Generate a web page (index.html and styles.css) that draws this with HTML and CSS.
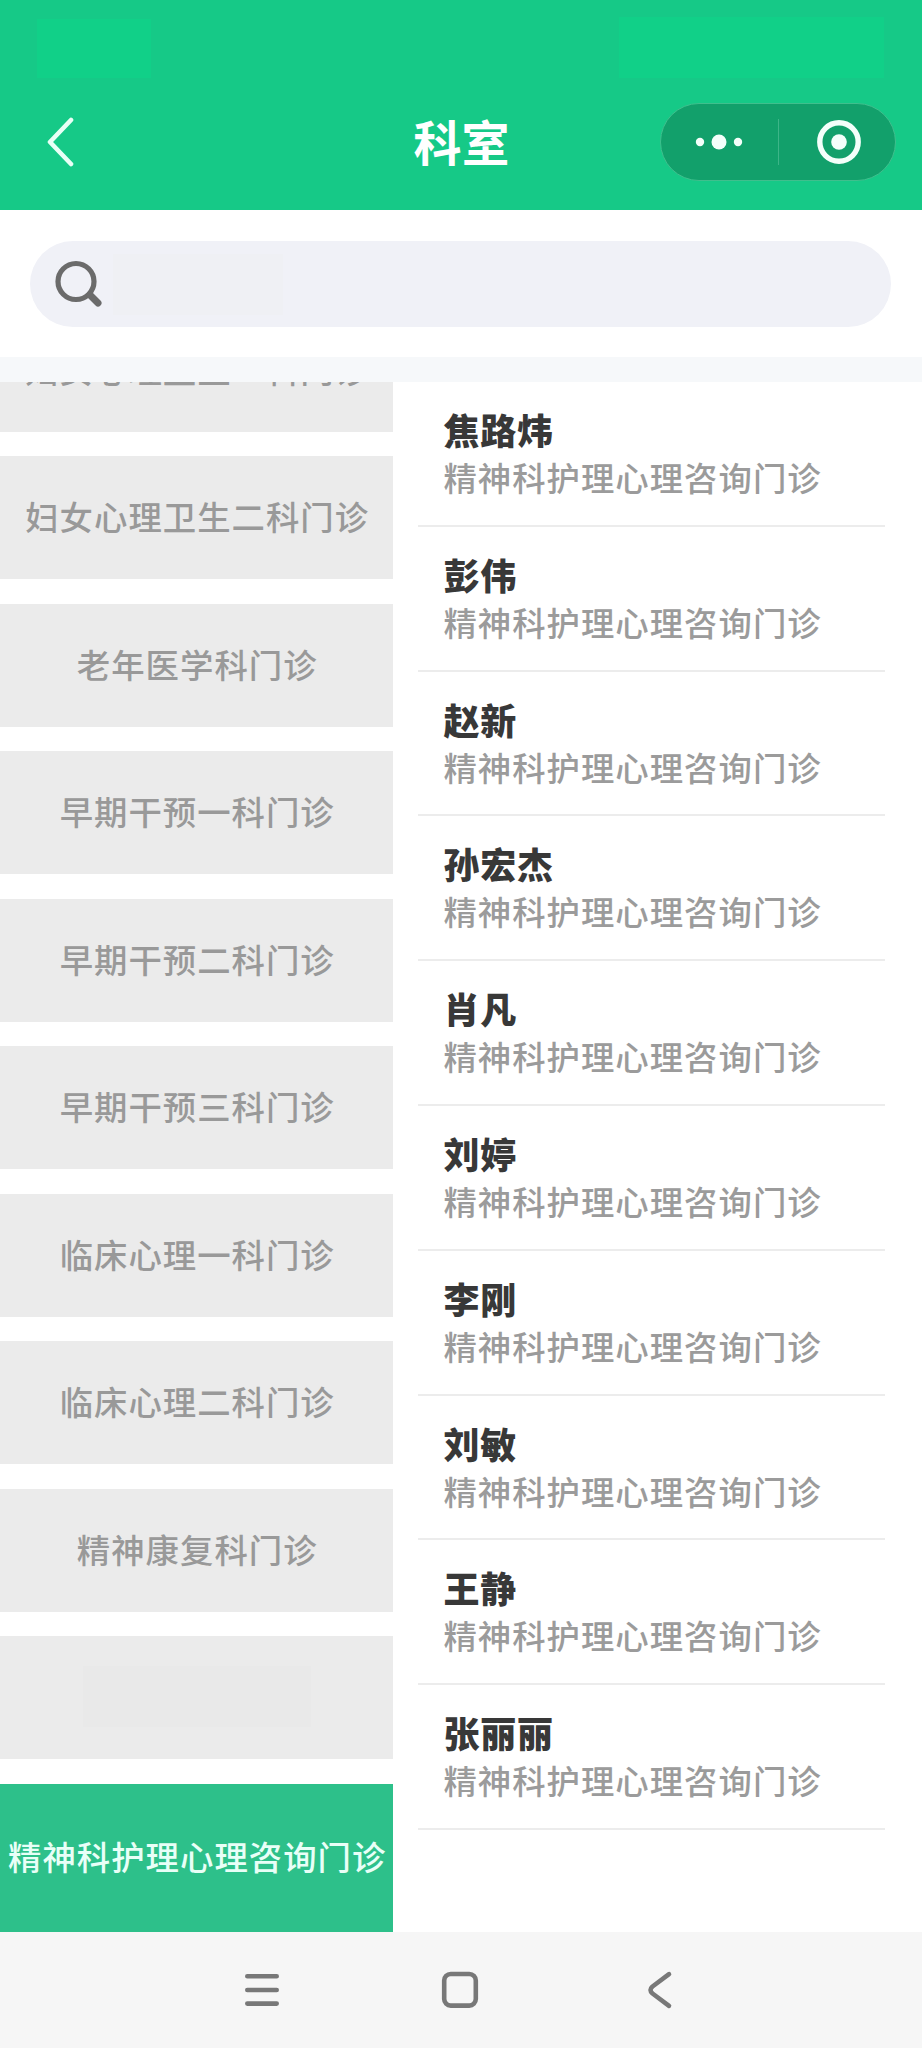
FILE: index.html
```html
<!DOCTYPE html>
<html lang="zh-CN">
<head>
<meta charset="utf-8" />
<meta name="viewport" content="width=device-width,initial-scale=1" />
<title>科室</title>
<link rel="stylesheet" href="styles.css">
</head>
<body>
<header class="header">
  <div class="status">
    <span class="status-time"></span>
    <span class="status-icons"></span>
  </div>
  <div class="titlebar">
    <svg class="back" viewBox="0 0 30 50"><path d="M24 3 3 25l21 22"/></svg>
    <h1>科室</h1>
    <div class="capsule">
      <svg class="dots" viewBox="0 0 48 16"><circle cx="5" cy="8" r="4.2"/><circle cx="24" cy="8" r="7.5"/><circle cx="43" cy="8" r="4.2"/></svg>
      <span class="capsule-line"></span>
      <svg class="target" viewBox="0 0 44 44"><circle class="ring" cx="22" cy="22" r="19.2"/><circle cx="22" cy="22" r="7.8"/></svg>
    </div>
  </div>
</header>

<div class="search">
  <div class="search-box">
    <svg class="search-icon" viewBox="0 0 50 50"><circle cx="22" cy="22.5" r="18"/><path d="m36 36 8 8"/></svg>
    <span class="search-hint"></span>
  </div>
</div>

<main class="content">
  <nav class="depts">
    <div class="dept">妇女心理卫生一科门诊</div>
    <div class="dept">妇女心理卫生二科门诊</div>
    <div class="dept">老年医学科门诊</div>
    <div class="dept">早期干预一科门诊</div>
    <div class="dept">早期干预二科门诊</div>
    <div class="dept">早期干预三科门诊</div>
    <div class="dept">临床心理一科门诊</div>
    <div class="dept">临床心理二科门诊</div>
    <div class="dept">精神康复科门诊</div>
    <div class="dept"><span class="dept-blank"></span></div>
    <div class="dept active">精神科护理心理咨询门诊</div>
  </nav>

  <section class="doctors">
    <div class="doctor"><h2>焦路炜</h2><p>精神科护理心理咨询门诊</p></div>
    <div class="doctor"><h2>彭伟</h2><p>精神科护理心理咨询门诊</p></div>
    <div class="doctor"><h2>赵新</h2><p>精神科护理心理咨询门诊</p></div>
    <div class="doctor"><h2>孙宏杰</h2><p>精神科护理心理咨询门诊</p></div>
    <div class="doctor"><h2>肖凡</h2><p>精神科护理心理咨询门诊</p></div>
    <div class="doctor"><h2>刘婷</h2><p>精神科护理心理咨询门诊</p></div>
    <div class="doctor"><h2>李刚</h2><p>精神科护理心理咨询门诊</p></div>
    <div class="doctor"><h2>刘敏</h2><p>精神科护理心理咨询门诊</p></div>
    <div class="doctor"><h2>王静</h2><p>精神科护理心理咨询门诊</p></div>
    <div class="doctor"><h2>张丽丽</h2><p>精神科护理心理咨询门诊</p></div>
  </section>
</main>

<footer class="navbar">
  <svg viewBox="0 0 44 44"><path d="M7.300 8.300h29.400M7.300 22h29.400M7.300 35.600h29.400"/></svg>
  <svg viewBox="0 0 44 44"><rect x="6.200" y="6" width="31.600" height="31.600" rx="6.500"/></svg>
  <svg viewBox="0 0 44 44"><path d="M32 6.200 15.500 18.500q-4 3.500 0 7L32 37.800"/></svg>
</footer>
</body>
</html>
```
FILE: styles.css
```css
*{box-sizing:border-box;}
body{margin:0;width:922px;height:2048px;display:flex;flex-direction:column;overflow:hidden;background:#fff;font-family:"Noto Sans CJK SC",sans-serif;}
h1,h2,p{margin:0;}
svg{display:block;flex:none;}

/* header */
.header{height:210px;flex:none;background:#16c987;}
.status{display:flex;justify-content:space-between;align-items:flex-end;height:78px;padding:0 38px 0 37px;}
.status-time{width:114px;height:59px;background:#11d088;}
.status-icons{width:265px;height:61px;background:#11d088;}
.titlebar{display:grid;grid-template-columns:1fr auto 1fr;align-items:center;height:127px;padding:0 26px 0 47px;}
.titlebar h1{margin-left:-20px;padding-bottom:4px;font-size:48px;line-height:64px;font-weight:700;color:#fff;}
.back{width:30px;height:50px;fill:none;stroke:#e9fff6;stroke-width:4.6;stroke-linecap:round;stroke-linejoin:round;}
.capsule{justify-self:end;display:flex;align-items:center;width:236px;height:78px;padding:0 34px;border:1px solid #3fbf8d;border-radius:39px;background:#12a06b;}
.dots{width:48px;height:16px;fill:#f3fffa;}
.capsule-line{width:1px;height:46px;margin:0 auto 0 35px;background:#3db588;}
.target{width:44px;height:44px;fill:#f3fffa;}
.ring{fill:none;stroke:#f3fffa;stroke-width:5.4;}

/* search */
.search{height:172px;flex:none;padding:31px 31px 0 30px;border-bottom:25px solid #f6f8fa;}
.search-box{display:flex;align-items:center;height:86px;padding-left:24px;border-radius:43px;background:#f0f1f7;}
.search-icon{width:50px;height:50px;fill:none;stroke:#6b6b6b;stroke-width:5.2;}
.search-icon path{stroke-width:7;stroke-linecap:round;}
.search-hint{width:170px;height:61px;margin-left:9px;background:#eff0f4;}

/* two columns */
.content{display:flex;flex:1;min-height:0;overflow:hidden;}
.depts{width:393.4px;flex:none;margin-top:-73.2px;}
.dept{display:flex;align-items:center;justify-content:center;height:123px;margin-bottom:24.5px;padding:0 0 3px 1px;background:#ebebeb;color:#999;font-size:33.4px;line-height:48px;letter-spacing:1px;font-weight:500;white-space:nowrap;}
.dept.active{height:148px;background:#2dc08a;color:#e8fff7;}
.dept-blank{width:228px;height:61px;background:#e9e9e9;}
.doctors{width:467px;margin-left:25px;}
.doctor{height:144.8px;padding:23px 0 0 25px;border-bottom:2px solid #ececec;}
.doctor h2{font-size:36px;line-height:48px;letter-spacing:.8px;font-weight:900;color:#383838;}
.doctor p{font-size:33.4px;line-height:48px;letter-spacing:1px;font-weight:500;color:#9b9b9b;white-space:nowrap;}

/* system bar */
.navbar{display:flex;justify-content:center;gap:154.500px;height:116px;flex:none;padding:36px 2px 0 0;background:#f6f6f6;}
.navbar svg{width:44px;height:44px;fill:none;stroke:#787878;stroke-width:4.6;stroke-linecap:round;stroke-linejoin:round;}
```
